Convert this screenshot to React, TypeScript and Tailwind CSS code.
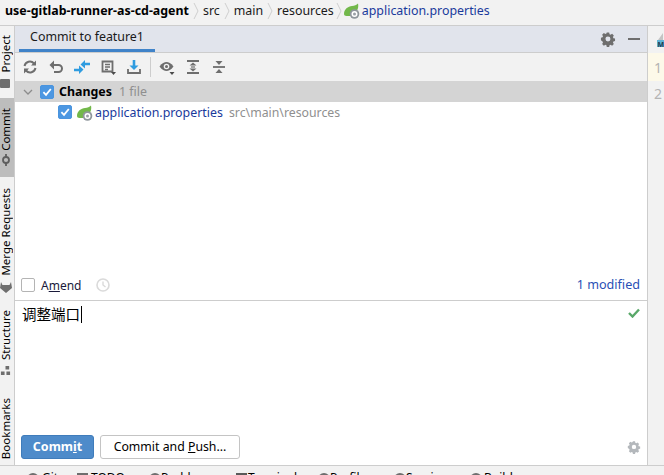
import type { ReactNode } from 'react';

const Gear = ({ color = '#6e6e6e', size = 16 }: { color?: string; size?: number }) => (
  <svg width={size} height={size} viewBox="0 0 16 16">
    <path
      fill={color}
      fillRule="evenodd"
      d="M6.6 1h2.8l.4 2 1.2.6 1.8-1 2 2-1 1.8.5 1.2 1.9.5v2.8l-1.9.5-.5 1.2 1 1.8-2 2-1.8-1-1.2.5-.4 1.9H6.6l-.4-1.9-1.2-.5-1.8 1-2-2 1-1.8-.5-1.2L-.2 10V7.2l1.9-.5.5-1.2-1-1.8 2-2 1.8 1 1.2-.6zM8 5.6a2.9 2.9 0 1 0 0 5.8 2.9 2.9 0 0 0 0-5.8z"
      transform="translate(1.1 .6) scale(.86)"
    />
  </svg>
);

const Spring = () => (
  <svg className="shrink-0" width="16" height="16" viewBox="0 0 16 16">
    <path fill="#72b84a" d="M0 11C0 6 4 3.500 8 3c2.500-.3 4.500-1 6-2.500.6 2.500.2 5-1 7L6 13H2.500C1 13 0 12.200 0 11z" />
    <circle cx="10.500" cy="11" r="4.800" fill="#8f969c" />
    <circle cx="10.500" cy="11" r="3" fill="#fff" />
    <circle cx="10.500" cy="11" r="1.500" fill="#9aa0a6" />
  </svg>
);

const Check = ({ on, className }: { on: boolean; className?: string }) => (
  <span
    className={`flex h-[14px] w-[14px] shrink-0 items-center justify-center rounded-[2px] border ${
      on ? 'border-[#4a94de] bg-[#4c97e2]' : 'border-[#b4b4b4] bg-white'
    } ${className ?? ''}`}
  >
    {on && (
      <svg width="12" height="12" viewBox="0 0 12 12">
        <path d="M2.400 6.200 5 8.800 9.800 3" fill="none" stroke="#fff" strokeWidth="1.800" />
      </svg>
    )}
  </span>
);

const ToolIcon = ({ children, className }: { children: ReactNode; className?: string }) => (
  <span className={`flex h-4 w-4 shrink-0 items-center justify-center ${className ?? ''}`}>
    <svg width="16" height="16" viewBox="0 0 16 16" fill="none">
      {children}
    </svg>
  </span>
);

const SideTab = ({ label, icon, className }: { label: string; icon: ReactNode; className?: string }) => (
  <div className={`flex w-[14px] shrink-0 flex-col items-start ${className ?? ''}`}>
    <span className="rotate-180 text-[11.500px] leading-[12px] text-black [writing-mode:vertical-rl]">{label}</span>
    {icon}
  </div>
);

const StatusItem = ({ label, width, gap, icon }: { label: string; width: string; gap: string; icon: ReactNode }) => (
  <div className={`flex shrink-0 items-start ${width}`}>
    <span className="mt-[3px] h-3 w-3 shrink-0">{icon}</span>
    <span className={`text-[12px] leading-[16px] text-black ${gap}`}>{label}</span>
  </div>
);

const blob = <span className="block h-3 w-3 rounded-full bg-[#6e6e6e]" />;
const box = <span className="block h-3 w-[11px] bg-[#5a5a5a]" />;
const stripe = <span className="block h-[2px] w-[11px] bg-[#6e6e6e]" />;

export default function App() {
  return (
    <div className="flex h-[475px] w-[664px] flex-col overflow-hidden bg-[#f2f2f2] font-['Noto_Sans','Noto_Sans_CJK_SC',sans-serif]">
      {/* breadcrumb */}
      <div className="flex h-[26px] shrink-0 items-center border-b border-[#cdcdcd] pb-[3px] pl-[5px] text-[12.400px] text-[#1a1a1a]">
        <span className="font-bold text-black">use-gitlab-runner-as-cd-agent</span>
        <Crumb />
        <span>src</span>
        <Crumb />
        <span>main</span>
        <Crumb />
        <span>resources</span>
        <svg className="mx-[2px]" width="6" height="18" viewBox="0 0 6 18" fill="none">
          <path d="M1 1l4 8-4 8" stroke="#cfcfcf" strokeWidth="1" />
        </svg>
        <Spring />
        <span className="ml-[2px] text-[#1a3a9c]">application.properties</span>
      </div>

      <div className="flex h-[439px] shrink-0">
        {/* left tool strip */}
        <div className="flex w-[15px] shrink-0 flex-col overflow-hidden border-r border-[#cdcdcd]">
          <SideTab
            label="Project"
            className="h-[72px] pt-[9px]"
            icon={<span className="mt-[6px] h-[9px] w-[10px] rounded-[1px] bg-[#6e6e6e]" />}
          />
          <SideTab
            label="Commit"
            className="h-[79px] justify-end bg-[#bdbdbd] pb-[11px]"
            icon={
              <svg className="mt-[3px]" width="12" height="12" viewBox="0 0 12 12" fill="none">
                <circle cx="6" cy="6" r="3" stroke="#5e5e5e" strokeWidth="1.800" />
                <path d="M6 0v3M6 9v3" stroke="#5e5e5e" strokeWidth="1.800" />
              </svg>
            }
          />
          <SideTab
            label="Merge Requests"
            className="mt-[11px] h-[112px]"
            icon={
              <svg className="mt-[5px]" width="12" height="12" viewBox="0 0 12 12">
                <path fill="#6e6e6e" d="M1 1 2.500 4h7L11 1l1 6-6 5-6-5z" />
              </svg>
            }
          />
          <SideTab
            label="Structure"
            className="h-[88px] pt-[10px]"
            icon={
              <svg className="mt-[5px]" width="11" height="11" viewBox="0 0 12 12">
                <path fill="#6e6e6e" d="M6 1h4v4H6zM1 7h4v4H1zM7 7h4v4H7z" />
              </svg>
            }
          />
          <SideTab
            label="Bookmarks"
            className="h-[77px] pt-[10px]"
            icon={<span className="mt-[6px] h-[7px] w-[10px] shrink-0 bg-[#6e6e6e]" />}
          />
        </div>

        {/* commit panel */}
        <div className="flex w-[633px] shrink-0 flex-col border-r border-[#cdcdcd] bg-white">
          <div className="flex h-[27px] shrink-0 items-start justify-between border-b border-[#cdcdcd] bg-[#e1e4ec] pl-[4px] pr-[7px]">
            <div className="flex h-[26px] w-[136px] items-center justify-center border-b-[3px] border-[#4083c9] text-[12.400px] text-[#1a1a1a]">
              Commit to feature1
            </div>
            <div className="flex h-[26px] items-center gap-[12px]">
              <Gear />
              <span className="h-[2px] w-[12px] bg-[#6e6e6e]" />
            </div>
          </div>

          <div className="flex h-[28px] shrink-0 items-center bg-[#f2f2f2] pl-[7px]">
            <ToolIcon>
              <path d="M2.500 7a5.500 5.500 0 0 1 9.500-2.500M13.500 9A5.500 5.500 0 0 1 4 11.500" stroke="#6e6e6e" strokeWidth="2" />
              <path d="M14 1.500v5H9zM2 14.500v-5h5z" fill="#6e6e6e" />
            </ToolIcon>
            <ToolIcon className="ml-[10px]">
              <path d="M4 6h6.500a3.500 3.500 0 0 1 0 7H6" stroke="#6e6e6e" strokeWidth="2" />
              <path d="M6 1.500 1.500 6 6 10.500z" fill="#6e6e6e" />
            </ToolIcon>
            <ToolIcon className="ml-[10px]">
              <path d="M10 5h6M6 11H0" stroke="#2f9ce0" strokeWidth="2.600" />
              <path d="M6.500 5.500 11 1v8.500zM9.500 10.500 5 6.500V15z" fill="#2f9ce0" />
            </ToolIcon>
            <ToolIcon className="ml-[10px]">
              <path d="M2.500 2.500h10v10h-10z" stroke="#6e6e6e" strokeWidth="1.800" />
              <path d="M5 5.500h5M5 8h5M5 10.500h3" stroke="#6e6e6e" strokeWidth="1.300" />
              <path d="M11 13h5l-2.500 3z" fill="#4a4a4a" />
            </ToolIcon>
            <ToolIcon className="ml-[10px]">
              <path d="M8 1v7" stroke="#2f9ce0" strokeWidth="2.600" />
              <path d="M3.500 6.500h9L8 11z" fill="#2f9ce0" />
              <path d="M2 10v4h12v-4" stroke="#6e6e6e" strokeWidth="1.800" />
            </ToolIcon>
            <span className="ml-[8px] mr-[8px] h-[20px] w-px bg-[#cdcdcd]" />
            <ToolIcon>
              <path d="M.500 7.500C3 4 5.500 3 7.500 3s4.500 1 7 4.500c-2.500 3.500-5 4.500-7 4.500s-4.500-1-7-4.500z" fill="#6e6e6e" />
              <circle cx="7.500" cy="7.500" r="2.800" fill="#f2f2f2" />
              <circle cx="7.500" cy="7.500" r="1.500" fill="#6e6e6e" />
              <path d="M10.500 13h5L13 16z" fill="#4a4a4a" />
            </ToolIcon>
            <ToolIcon className="ml-[10px]">
              <path d="M2 2h12M2 14h12" stroke="#6e6e6e" strokeWidth="1.800" />
              <path d="M4.500 6.500 8 3.500l3.500 3zM4.500 9.500 8 12.500l3.500-3z" fill="#6e6e6e" />
              <path d="M6 8h4" stroke="#6e6e6e" strokeWidth="1.200" />
            </ToolIcon>
            <ToolIcon className="ml-[10px]">
              <path d="M2 8h12" stroke="#6e6e6e" strokeWidth="1.800" />
              <path d="M4.500 2 8 6l3.500-4zM4.500 14 8 10l3.500 4z" fill="#6e6e6e" />
            </ToolIcon>
          </div>

          {/* change list */}
          <div className="flex h-[21px] shrink-0 items-center bg-[#d4d4d4] pl-[8px] text-[12.400px]">
            <svg width="10" height="10" viewBox="0 0 10 10" fill="none">
              <path d="M1 3l4 4 4-4" stroke="#8c8c8c" strokeWidth="1.300" />
            </svg>
            <Check on className="ml-[7px]" />
            <span className="ml-[5px] pt-[2px] font-bold text-black">Changes</span>
            <span className="ml-[7px] pt-[2px] text-[#8f8f8f]">1 file</span>
          </div>
          <div className="flex h-[168px] shrink-0 items-start pl-[43px] pt-[3px] text-[12.400px]">
            <Check on />
            <span className="ml-[5px]">
              <Spring />
            </span>
            <span className="ml-[2px] -mt-[2px] leading-[20px] text-[#1a3a9c]">application.properties</span>
            <span className="ml-[6px] -mt-[2px] text-[12.300px] leading-[20px] text-[#8f8f8f]">src\main\resources</span>
          </div>

          <div className="flex h-[31px] shrink-0 items-center justify-between border-b border-[#cdcdcd] pl-[6px] pr-[7px] text-[12px]">
            <div className="flex items-center">
              <Check on={false} />
              <span className="ml-[6px] pt-[1px] text-[#1a1a3a]">
                A<span className="underline">m</span>end
              </span>
              <svg className="ml-[15px]" width="14" height="14" viewBox="0 0 14 14" fill="none">
                <circle cx="7" cy="7" r="6" stroke="#dadada" strokeWidth="1.600" />
                <path d="M7 3.500V7l2.500 2" stroke="#dadada" strokeWidth="1.400" />
              </svg>
            </div>
            <span className="pt-[1px] text-[12.600px] text-[#2a4fb5]">1 modified</span>
          </div>

          {/* message editor */}
          <div className="flex min-h-0 flex-1 flex-col bg-white pb-[6px] pl-[6px] pr-[7px]">
            <div className="flex flex-1 items-start justify-between pt-[4px]">
              <div className="flex items-center pl-[1px]">
                <span className="text-[14.500px] leading-[18px] text-black">调整端口</span>
                <span className="ml-[1px] h-[17px] w-px bg-black" />
              </div>
              <svg className="mt-[3px]" width="12" height="10" viewBox="0 0 12 10" fill="none">
                <path d="M1 5l3.500 3.500L11 1.500" stroke="#59a869" strokeWidth="2.400" />
              </svg>
            </div>
            <div className="flex items-center justify-between">
              <div className="flex items-center gap-[6px]">
                <span className="flex h-[24px] w-[73px] items-center justify-center rounded-[3px] border border-[#3f7cbb] bg-[#4e8bca] text-[12.500px] font-bold text-white">
                  <span>
                    Comm<span className="underline">i</span>t
                  </span>
                </span>
                <span className="flex h-[24px] w-[140px] items-center justify-center rounded-[3px] border border-[#c4c4c4] bg-white text-[12.300px] text-black">
                  <span>
                    Commit and <span className="underline">P</span>ush...
                  </span>
                </span>
              </div>
              <span className="-mr-[1px]">
                <Gear color="#b4b8bc" size={14} />
              </span>
            </div>
          </div>
        </div>

        {/* editor gutter peek */}
        <div className="flex w-[16px] shrink-0 flex-col overflow-hidden bg-[#f2f2f2]">
          <div className="flex h-[27px] shrink-0 items-end pb-[5px] pl-[9px]">
            <svg className="shrink-0" width="14" height="16" viewBox="0 0 14 16">
              <path d="M1 8 6 1v7z" fill="#c4c4c4" />
              <rect y="8" width="14" height="7" fill="#5fb3d6" />
              <text x="0.500" y="14.500" fontSize="7" fontWeight="700" fill="#1c3a50" fontFamily="Noto Sans">M</text>
            </svg>
          </div>
          <div className="flex h-[28px] shrink-0 items-center bg-[#fdf9e9] pl-[6px] text-[14px] text-[#b4b4b4]">1</div>
          <div className="flex h-[24px] shrink-0 items-center pl-[6px] text-[14px] text-[#b4b4b4]">2</div>
        </div>
      </div>

      {/* status bar, cut off by the window */}
      <div className="flex h-[24px] shrink-0 items-start border-t border-[#cdcdcd] pl-[27px] pt-[4px]">
        <StatusItem label="Git" width="w-[50px]" gap="ml-[3px]" icon={blob} />
        <StatusItem label="TODO" width="w-[72px]" gap="ml-[2px]" icon={stripe} />
        <StatusItem label="Problems" width="w-[87px]" gap="ml-0" icon={blob} />
        <StatusItem label="Terminal" width="w-[82px]" gap="ml-0" icon={box} />
        <StatusItem label="Profiler" width="w-[76px]" gap="ml-0" icon={blob} />
        <StatusItem label="Services" width="w-[76px]" gap="ml-0" icon={blob} />
        <StatusItem label="Build" width="w-[60px]" gap="ml-[2px]" icon={blob} />
      </div>
    </div>
  );
}

function Crumb() {
  return (
    <svg className="mx-[4px]" width="6" height="18" viewBox="0 0 6 18" fill="none">
      <path d="M1 1l4 8-4 8" stroke="#cfcfcf" strokeWidth="1" />
    </svg>
  );
}
